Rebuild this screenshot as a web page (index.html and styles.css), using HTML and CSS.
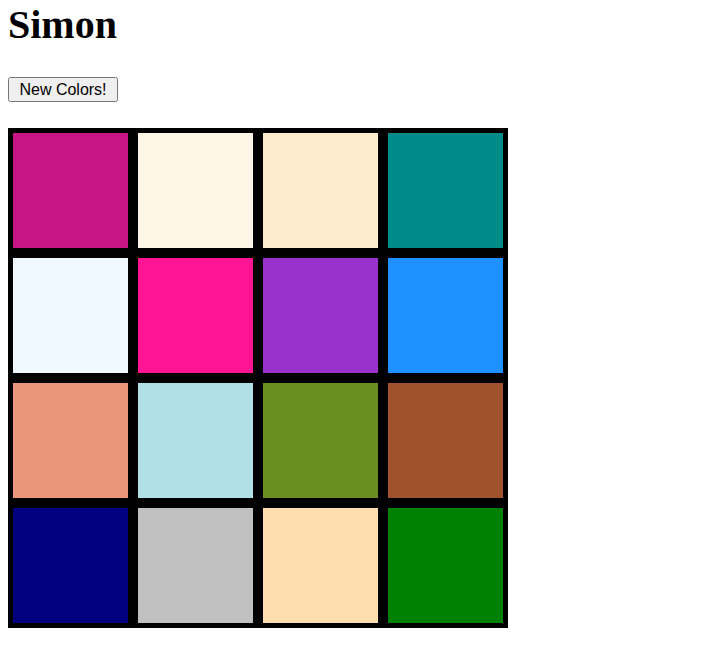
FILE: index.html
```html
<!DOCTYPE html>
<html>
<head>
<meta charset="utf-8">
<link rel="stylesheet" href="styles.css">
</head>
<body>
<h1 class="title">Simon</h1>
<div class="controls"><button class="new-btn">New Colors!</button></div>
<div class="board">
  <div class="cell c1"></div><div class="cell c2"></div><div class="cell c3"></div><div class="cell c4"></div>
  <div class="cell c5"></div><div class="cell c6"></div><div class="cell c7"></div><div class="cell c8"></div>
  <div class="cell c9"></div><div class="cell c10"></div><div class="cell c11"></div><div class="cell c12"></div>
  <div class="cell c13"></div><div class="cell c14"></div><div class="cell c15"></div><div class="cell c16"></div>
</div>
</body>
</html>
```
FILE: styles.css
```css
body {
  margin: 2px 8px 8px;
  font-family: "Liberation Serif", serif;
}
.title {
  font-size: 40px;
  line-height: 46px;
  font-weight: bold;
  margin: 0;
}
.controls {
  margin-top: 29px;
  height: 25px;
}
.new-btn {
  font-family: "Liberation Sans", Arial, sans-serif;
  font-size: 16px;
  height: 25px;
  width: 110px;
  padding: 1px 6px;
}
.board {
  margin-top: 26px;
  width: 500px;
  height: 500px;
  background: #000;
  display: flex;
  flex-wrap: wrap;
}
.cell {
  width: 115px;
  height: 115px;
  margin: 5px;
}
.c1 { background: mediumvioletred; }
.c2 { background: oldlace; }
.c3 { background: blanchedalmond; }
.c4 { background: darkcyan; }
.c5 { background: aliceblue; }
.c6 { background: deeppink; }
.c7 { background: darkorchid; }
.c8 { background: dodgerblue; }
.c9 { background: darksalmon; }
.c10 { background: powderblue; }
.c11 { background: olivedrab; }
.c12 { background: sienna; }
.c13 { background: navy; }
.c14 { background: silver; }
.c15 { background: navajowhite; }
.c16 { background: green; }
```
